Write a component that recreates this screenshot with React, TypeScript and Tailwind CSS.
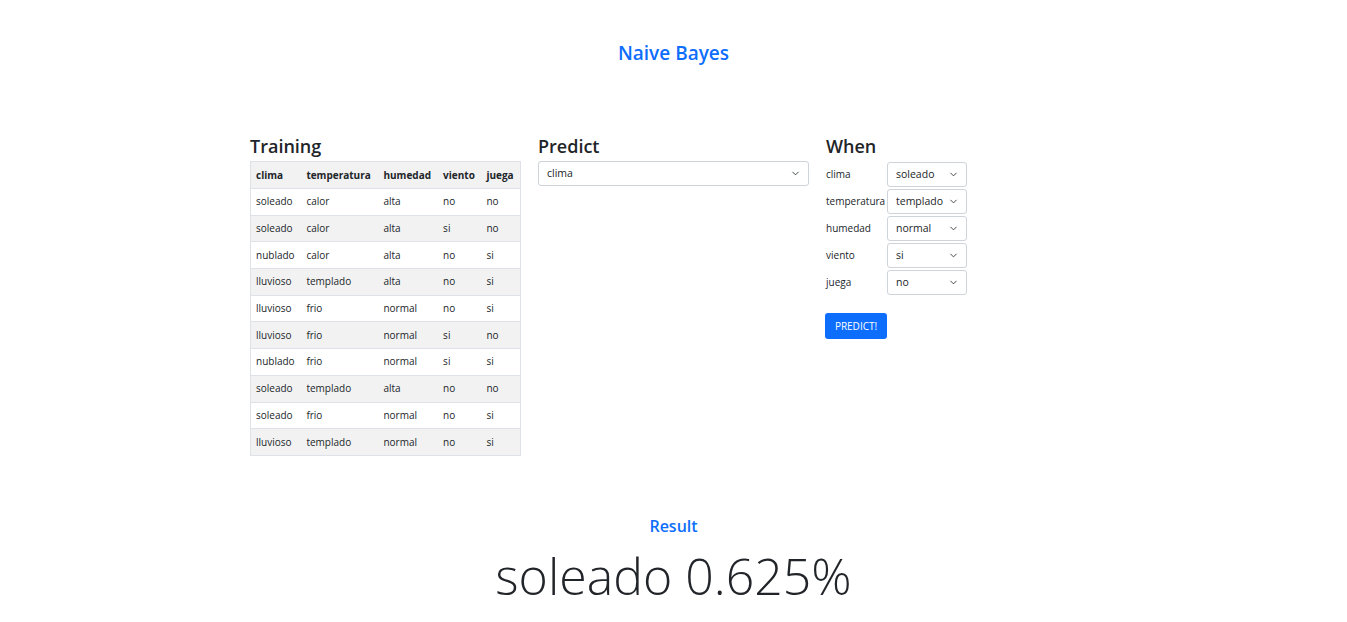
import { ChevronDown } from 'lucide-react';

const columns = ['clima', 'temperatura', 'humedad', 'viento', 'juega'];

const rows = [
  ['soleado', 'calor', 'alta', 'no', 'no'],
  ['soleado', 'calor', 'alta', 'si', 'no'],
  ['nublado', 'calor', 'alta', 'no', 'si'],
  ['lluvioso', 'templado', 'alta', 'no', 'si'],
  ['lluvioso', 'frio', 'normal', 'no', 'si'],
  ['lluvioso', 'frio', 'normal', 'si', 'no'],
  ['nublado', 'frio', 'normal', 'si', 'si'],
  ['soleado', 'templado', 'alta', 'no', 'no'],
  ['soleado', 'frio', 'normal', 'no', 'si'],
  ['lluvioso', 'templado', 'normal', 'no', 'si'],
];

const when = [
  { label: 'clima', value: 'soleado' },
  { label: 'temperatura', value: 'templado' },
  { label: 'humedad', value: 'normal' },
  { label: 'viento', value: 'si' },
  { label: 'juega', value: 'no' },
];

// fake select box, looks like bootstrap's form-select-sm
function SelectBox({ value, className }: { value: string; className?: string }) {
  return (
    <div
      className={`flex h-[25px] items-center justify-between rounded-[3px] border border-[#ced4da] bg-white pl-2 pr-[7px] text-[10.5px] text-[#212529] ${className ?? ''}`}
    >
      <span>{value}</span>
      <ChevronDown size={11} strokeWidth={2} className="text-[#343a40]" />
    </div>
  );
}

export default function App() {
  return (
    <div
      className="min-h-[622px] bg-white text-[#212529]"
      style={{ fontFamily: '"Open Sans", "Noto Sans", sans-serif' }}
    >
      <h1 className="pt-[39px] text-center text-[19px] font-semibold leading-[28px] text-[#0d6efd]">
        Naive Bayes
      </h1>

      <div className="mt-[66px] flex justify-center gap-[17px]">
        {/* Training */}
        <div className="w-[271px]">
          <h4 className="text-[18px] font-semibold leading-[26px]">Training</h4>
          <table className="mt-[2px] w-full border border-[#dee2e6] text-[10px]">
            <thead>
              <tr className="h-[27px] bg-[#f2f2f2]">
                {columns.map((c) => (
                  <th key={c} className="px-[5px] text-left font-bold">
                    {c}
                  </th>
                ))}
              </tr>
            </thead>
            <tbody>
              {rows.map((r, i) => (
                <tr
                  key={i}
                  className={`h-[26.7px] border-t border-[#dee2e6] ${i % 2 === 1 ? 'bg-[#f2f2f2]' : 'bg-white'}`}
                >
                  {r.map((v, j) => (
                    <td key={j} className="px-[5px]">
                      {v}
                    </td>
                  ))}
                </tr>
              ))}
            </tbody>
          </table>
        </div>

        {/* Predict */}
        <div className="w-[271px]">
          <h4 className="text-[18px] font-semibold leading-[26px]">Predict</h4>
          <SelectBox value="clima" className="mt-[2px] w-[271px]" />
        </div>

        {/* When */}
        <div className="w-[271px]">
          <h4 className="text-[18px] font-semibold leading-[26px]">When</h4>
          <div className="mt-[3px] flex flex-col gap-[2px]">
            {when.map((w) => (
              <div key={w.label} className="flex items-center">
                <span className="w-[61px] text-[10px]">{w.label}</span>
                <SelectBox value={w.value} className="w-[80px]" />
              </div>
            ))}
          </div>
          <button className="-ml-px mt-[18px] h-[26px] w-[62px] rounded-[3px] bg-[#0d6efd] text-[10px] text-white">
            PREDICT!
          </button>
        </div>
      </div>

      <div className="mt-[58px] text-center">
        <h5 className="text-[16px] font-semibold leading-[24px] text-[#0d6efd]">Result</h5>
        <p className="mt-[8px] text-[50px] font-light leading-[60px]">soleado 0.625%</p>
      </div>
    </div>
  );
}
